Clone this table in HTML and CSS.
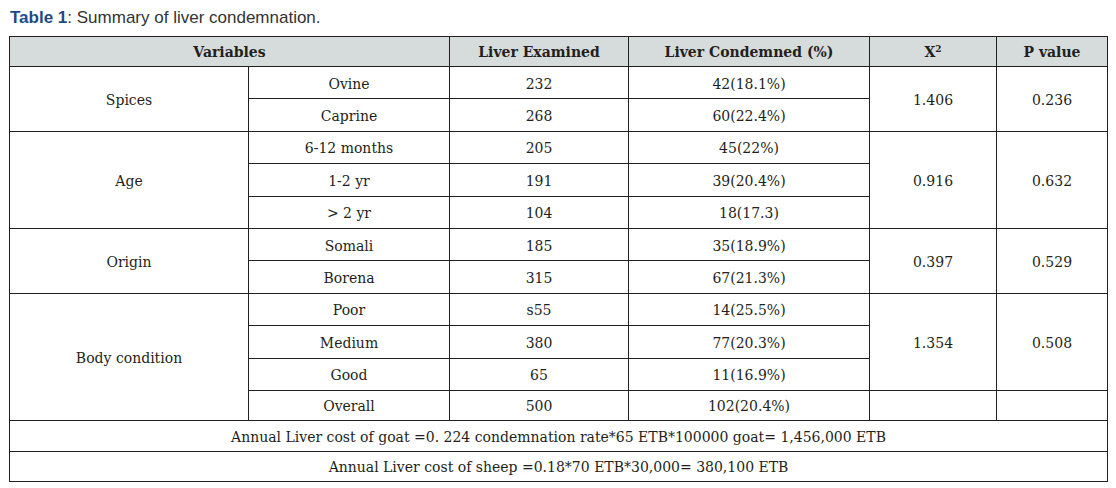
FILE: index.html
```html
<!DOCTYPE html>
<html>
<head>
<meta charset="utf-8">
<link rel="stylesheet" href="styles.css">
</head>
<body>
<div class="page">
  <p class="caption"><span class="label">Table 1</span>: Summary of liver condemnation.</p>
  <table class="data">
    <colgroup>
      <col class="c1"><col class="c2"><col class="c3"><col class="c4"><col class="c5"><col class="c6">
    </colgroup>
    <thead>
      <tr class="head">
        <th colspan="2">Variables</th>
        <th>Liver Examined</th>
        <th>Liver Condemned (%)</th>
        <th>X<sup>2</sup></th>
        <th>P value</th>
      </tr>
    </thead>
    <tbody>
      <tr class="r"><td rowspan="2">Spices</td><td>Ovine</td><td>232</td><td>42(18.1%)</td><td rowspan="2">1.406</td><td rowspan="2">0.236</td></tr>
      <tr class="r"><td>Caprine</td><td>268</td><td>60(22.4%)</td></tr>
      <tr class="r"><td rowspan="3">Age</td><td>6-12 months</td><td>205</td><td>45(22%)</td><td rowspan="3">0.916</td><td rowspan="3">0.632</td></tr>
      <tr class="r"><td>1-2 yr</td><td>191</td><td>39(20.4%)</td></tr>
      <tr class="r"><td>&gt; 2 yr</td><td>104</td><td>18(17.3)</td></tr>
      <tr class="r"><td rowspan="2">Origin</td><td>Somali</td><td>185</td><td>35(18.9%)</td><td rowspan="2">0.397</td><td rowspan="2">0.529</td></tr>
      <tr class="r"><td>Borena</td><td>315</td><td>67(21.3%)</td></tr>
      <tr class="r"><td rowspan="4">Body condition</td><td>Poor</td><td>s55</td><td>14(25.5%)</td><td rowspan="3">1.354</td><td rowspan="3">0.508</td></tr>
      <tr class="r"><td>Medium</td><td>380</td><td>77(20.3%)</td></tr>
      <tr class="r"><td>Good</td><td>65</td><td>11(16.9%)</td></tr>
      <tr class="s"><td>Overall</td><td>500</td><td>102(20.4%)</td><td></td><td></td></tr>
      <tr class="t"><td colspan="6">Annual Liver cost of goat =0. 224 condemnation rate*65 ETB*100000 goat= 1,456,000 ETB</td></tr>
      <tr class="s"><td colspan="6">Annual Liver cost of sheep =0.18*70 ETB*30,000= 380,100 ETB</td></tr>
    </tbody>
  </table>
</div>
</body>
</html>
```

FILE: styles.css
```css
html, body {
  margin: 0;
  padding: 0;
  background: #ffffff;
}

.page {
  padding: 8px 9px 0 9px;
}

.caption {
  margin: 0 0 8px 1px;
  font-family: "Liberation Sans", Arial, sans-serif;
  font-size: 17px;
  line-height: 20px;
  color: #333333;
}

.caption .label {
  font-weight: bold;
  color: #1d4a86;
}

.data {
  border-collapse: collapse;
  width: 1098px;
  table-layout: fixed;
  font-family: "DejaVu Serif", Georgia, serif;
  font-size: 14px;
  color: #231f20;
}

.c1 { width: 239px; }
.c2 { width: 201px; }
.c3 { width: 179px; }
.c4 { width: 241px; }
.c5 { width: 127px; }
.c6 { width: 111px; }

.data th,
.data td {
  border: 1px solid #231f20;
  text-align: center;
  vertical-align: middle;
  padding: 2px 4px 0 4px;
  white-space: nowrap;
}

.data th {
  background: #d6dcdb;
  font-weight: bold;
  padding-top: 1px;
}

.data sup {
  font-size: 9px;
  line-height: 0;
  vertical-align: 5px;
}

.head { height: 30px; }
.r { height: 32.4px; }
.s { height: 30px; }
.t { height: 31px; }
```
